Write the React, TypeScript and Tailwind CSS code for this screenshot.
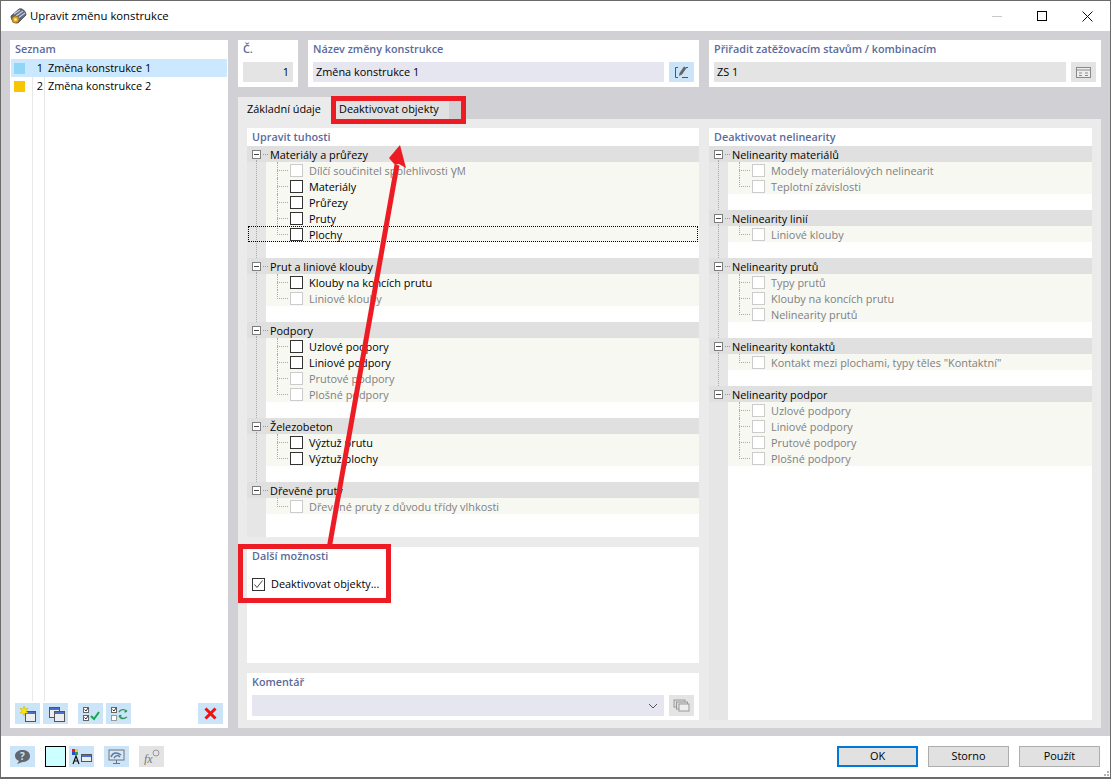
import React from "react";

const FONT = "font-['Open_Sans','Noto_Sans',sans-serif]";

type TreeItem = { label: React.ReactNode; on?: boolean };
type TreeGroup = { title: string; items: TreeItem[] };

const leftGroups: TreeGroup[] = [
  {
    title: "Materiály a průřezy",
    items: [
      { label: <>Dílčí součinitel spolehlivosti <span className="text-[12px]">γ</span><span className="text-[10px]">M</span></> },
      { label: "Materiály", on: true },
      { label: "Průřezy", on: true },
      { label: "Pruty", on: true },
      { label: "Plochy", on: true },
    ],
  },
  {
    title: "Prut a liniové klouby",
    items: [{ label: "Klouby na koncích prutu", on: true }, { label: "Liniové klouby" }],
  },
  {
    title: "Podpory",
    items: [
      { label: "Uzlové podpory", on: true },
      { label: "Liniové podpory", on: true },
      { label: "Prutové podpory" },
      { label: "Plošné podpory" },
    ],
  },
  {
    title: "Železobeton",
    items: [{ label: "Výztuž prutu", on: true }, { label: "Výztuž plochy", on: true }],
  },
  { title: "Dřevěné pruty", items: [{ label: "Dřevěné pruty z důvodu třídy vlhkosti" }] },
];

const rightGroups: TreeGroup[] = [
  { title: "Nelinearity materiálů", items: [{ label: "Modely materiálových nelinearit" }, { label: "Teplotní závislosti" }] },
  { title: "Nelinearity linií", items: [{ label: "Liniové klouby" }] },
  { title: "Nelinearity prutů", items: [{ label: "Typy prutů" }, { label: "Klouby na koncích prutu" }, { label: "Nelinearity prutů" }] },
  { title: "Nelinearity kontaktů", items: [{ label: 'Kontakt mezi plochami, typy těles "Kontaktní"' }] },
  { title: "Nelinearity podpor", items: [{ label: "Uzlové podpory" }, { label: "Liniové podpory" }, { label: "Prutové podpory" }, { label: "Plošné podpory" }] },
];

function Heading({ children }: { children: React.ReactNode }) {
  return <div className="h-[18px] pl-[5px] text-[10.8px] leading-[18px] font-semibold text-[#5a6a9a]">{children}</div>;
}

function Tree({ groups }: { groups: TreeGroup[] }) {
  return (
    <div className="flex flex-col">
      {groups.map((g, gi) => (
        <div key={g.title} className="relative mb-4">
          {gi < groups.length - 1 && <div className="absolute bottom-[-16px] left-[9px] top-[14px] border-l border-dotted border-[#aaa]" />}
          <div className="flex h-4 items-center bg-[#e0e0e0] pt-px">
            <div className="ml-[5px] flex h-[9px] w-[9px] items-center justify-center border border-[#7f7f7f] bg-white">
              <div className="h-px w-[5px] bg-[#444]" />
            </div>
            <div className="ml-[2px] w-[5px] border-t border-dotted border-[#999]" />
            <div className="ml-[2px] text-[10.9px] leading-4 text-black">{g.title}</div>
          </div>
          {g.items.map((it, i) => (
            <div key={i} className="relative ml-[19px] flex h-4 items-center bg-[#f7f8f2] pt-px">
              <div className={`absolute left-[11px] top-0 border-l border-dotted border-[#aaa] ${i < g.items.length - 1 ? "h-4" : "h-[9px]"}`} />
              <div className="ml-[11px] w-[11px] border-t border-dotted border-[#aaa]" />
              <div className={`ml-[2px] h-[13px] w-[13px] bg-white border ${it.on ? "border-[#333]" : "border-[#ccc]"}`} />
              <div className={`ml-[6px] whitespace-nowrap text-[10.9px] leading-4 ${it.on ? "text-black" : "text-[#808080]"}`}>{it.label}</div>
            </div>
          ))}
        </div>
      ))}
    </div>
  );
}

function IconBtn({ children, gray }: { children: React.ReactNode; gray?: boolean }) {
  return <div className={`flex h-[21px] w-[25px] items-center justify-center ${gray ? "bg-[#e3e3e3]" : "bg-[#cce4f7]"}`}>{children}</div>;
}

function Win({ x, y }: { x: number; y: number }) {
  return (
    <g>
      <rect x={x + 0.5} y={y + 0.5} width="10" height="10" fill="#eee" stroke="#555" />
      <rect x={x + 1} y={y + 1} width="9" height="2" fill="#4a6fd0" />
    </g>
  );
}

function Footer({ children, blue }: { children: string; blue?: boolean }) {
  return (
    <div className={`flex h-[21px] w-[81px] items-center justify-center bg-[#e1e1e1] text-[10.9px] text-black ${blue ? "border-2 border-[#0078d7]" : "border border-[#adadad]"}`}>
      {children}
    </div>
  );
}

export default function App() {
  return (
    <div className={`relative flex h-[779px] w-[1111px] flex-col overflow-hidden border border-b-2 border-[#6b6b6b] bg-white ${FONT}`}>
      {/* title bar */}
      <div className="flex h-[30px] shrink-0 items-center bg-white">
        <svg width="18" height="18" viewBox="0 0 18 18" className="ml-[8px]">
          <path d="M2 9 L10 2 C13 1 17 4 17 8 L9 16 C5 16 2 13 2 9 Z" fill="#5f6b80" stroke="#3c4454" strokeWidth="0.8" />
          <path d="M5 7 L11 3 M7 9 L14 4 M9 11 L16 6" stroke="#c9d0dc" strokeWidth="1.2" />
          <circle cx="6.5" cy="12.5" r="3.6" fill="#d9a520" stroke="#7d5f10" strokeWidth="0.7" />
          <circle cx="6.5" cy="12.5" r="1.3" fill="#fff3c0" />
        </svg>
        <div className="ml-[3px] text-[11.3px] text-black">Upravit změnu konstrukce</div>
        <div className="ml-auto flex items-center">
          <div className="h-px w-[10px] bg-[#c8c8c8]" />
          <div className="ml-[35px] h-[10px] w-[10px] border border-black" />
          <svg width="11" height="11" viewBox="0 0 11 11" className="ml-[35px] mr-[17px]">
            <path d="M0.5 0.5 L10.5 10.5 M10.5 0.5 L0.5 10.5" stroke="#111" strokeWidth="1" />
          </svg>
        </div>
      </div>

      {/* body */}
      <div className="flex min-h-0 flex-1 gap-[10px] bg-[#d1d0d5] pb-2 pl-[9px] pr-[9px] pt-[9px]">
        {/* list */}
        <div className="flex w-[218px] shrink-0 flex-col bg-white">
          <Heading>Seznam</Heading>
          <div className="relative mt-px flex-1 pl-px pr-px">
            <div className="absolute bottom-[2px] left-[22px] top-0 w-px bg-[#e8e8e8]" />
            <div className="absolute bottom-[2px] left-[34px] top-0 w-px bg-[#e8e8e8]" />
            <div className="relative flex h-[18px] items-center bg-[#cce8ff] text-[10.9px] text-black">
              <div className="ml-[3px] h-[11px] w-[11px] bg-[#90d6f7]" />
              <div className="ml-[11px] w-[7px] text-right">1</div>
              <div className="ml-[5px]">Změna konstrukce 1</div>
            </div>
            <div className="relative flex h-[18px] items-center text-[10.9px] text-black">
              <div className="ml-[3px] h-[11px] w-[11px] bg-[#f7c600]" />
              <div className="ml-[11px] w-[7px] text-right">2</div>
              <div className="ml-[5px]">Změna konstrukce 2</div>
            </div>
          </div>
          <div className="mb-1 flex h-[21px] items-center pl-[5px] pr-[5px]">
            <IconBtn>
              <svg width="20" height="18" viewBox="0 0 20 18">
                <Win x={7} y={6} />
                <path d="M6 1 L7 4 L10 3 L8 6 L10 8 L7 8 L6 11 L5 8 L2 8 L4 6 L2 3 L5 4 Z" fill="#ffe600" stroke="#c8b400" strokeWidth="0.5" />
              </svg>
            </IconBtn>
            <div className="ml-[3px]">
              <IconBtn>
                <svg width="20" height="18" viewBox="0 0 20 18">
                  <Win x={3} y={2} />
                  <Win x={8} y={6} />
                </svg>
              </IconBtn>
            </div>
            <div className="ml-[10px]">
              <IconBtn>
                <svg width="20" height="18" viewBox="0 0 20 18">
                  <rect x="2.5" y="2.5" width="5" height="5" fill="#fff" stroke="#666" />
                  <rect x="2.5" y="10.5" width="5" height="5" fill="#fff" stroke="#666" />
                  <path d="M3.5 4.5 L5 6 L7 3 M3.5 12.5 L5 14 L7 11" fill="none" stroke="#333" />
                  <path d="M10 11 L13 14 L18 7" fill="none" stroke="#13a84a" strokeWidth="2" />
                </svg>
              </IconBtn>
            </div>
            <div className="ml-[3px]">
              <IconBtn>
                <svg width="20" height="18" viewBox="0 0 20 18">
                  <rect x="2.5" y="2.5" width="5" height="5" fill="#fff" stroke="#666" />
                  <rect x="2.5" y="10.5" width="5" height="5" fill="#fff" stroke="#999" />
                  <path d="M3.5 4.5 L5 6 L7 3" fill="none" stroke="#333" />
                  <path d="M10 7 C12 4 15 4 18 6 M18 6 L15.5 7 M10 11 C12 14 15 14 18 12 M10 11 L12.5 10.5" fill="none" stroke="#2a9a55" strokeWidth="1.4" />
                </svg>
              </IconBtn>
            </div>
            <div className="ml-auto">
              <IconBtn>
                <svg width="13" height="13" viewBox="0 0 13 13">
                  <path d="M1.5 1.5 L11.5 11.5 M11.5 1.5 L1.5 11.5" stroke="#ee1111" strokeWidth="3" />
                </svg>
              </IconBtn>
            </div>
          </div>
        </div>

        {/* main */}
        <div className="flex min-w-0 flex-1 flex-col">
          <div className="flex h-[47px] shrink-0 gap-[10px]">
            <div className="w-[60px] bg-white">
              <Heading>Č.</Heading>
              <div className="ml-[5px] mt-[4px] h-5 w-[50px] bg-[#e4e4e4] pr-[4px] text-right text-[10.9px] leading-5 text-black">1</div>
            </div>
            <div className="w-[391px] bg-white">
              <Heading>Název změny konstrukce</Heading>
              <div className="ml-[5px] mt-[4px] flex h-5 gap-[5px]">
                <div className="h-5 w-[351px] bg-[#e6e6f1] pl-[3px] text-[10.9px] leading-5 text-black">Změna konstrukce 1</div>
                <div className="flex h-5 w-[25px] items-center justify-center bg-[#cce4f7]">
                  <svg width="17" height="15" viewBox="0 0 17 15">
                    <path d="M5 2.5 H2.5 V12.5 H5 M9 12.5 H15 M13 2.5 H15" fill="none" stroke="#555" />
                    <path d="M6 11 L6.5 8 L11 1.5 L13.5 3 L9 9.5 Z" fill="#666" />
                  </svg>
                </div>
              </div>
            </div>
            <div className="flex-1 bg-white">
              <Heading>Přiřadit zatěžovacím stavům / kombinacím</Heading>
              <div className="ml-[5px] mt-[4px] flex h-5 gap-[5px]">
                <div className="h-5 w-[352px] bg-[#e4e4e4] pl-[3px] text-[10.9px] leading-5 text-black">ZS 1</div>
                <div className="flex h-5 w-[25px] items-center justify-center bg-[#e4e4e4]">
                  <svg width="17" height="13" viewBox="0 0 17 13">
                    <rect x="1.5" y="1.5" width="14" height="10" fill="#eee" stroke="#8a8a8a" />
                    <path d="M1.5 4 H15.5 M4 7 H7 M10 7 H13 M4 9.5 H7 M10 9.5 H13" stroke="#8a8a8a" />
                  </svg>
                </div>
              </div>
            </div>
          </div>

          {/* tabs */}
          <div className="mt-[10px] flex h-[22px] shrink-0 text-[10.9px] text-black">
            <div className="flex w-[93px] items-center bg-[#ebebeb] pl-[9px] pt-[3px] whitespace-nowrap">Základní údaje</div>
            <div className="flex w-[118px] items-center bg-[#e1e1e1] pl-[8px] pt-[3px] whitespace-nowrap">Deaktivovat objekty</div>
          </div>

          <div className="flex min-h-0 flex-1 gap-[10px] bg-[#ebebeb] pb-2 pl-[9px] pr-[9px] pt-[9px]">
            <div className="flex w-[452px] shrink-0 flex-col gap-[10px]">
              <div className="h-[409px] bg-white">
                <Heading>Upravit tuhosti</Heading>
                <div className="h-[391px] bg-[linear-gradient(to_right,#e6e6e6_19px,#ffffff_19px)]">
                  <Tree groups={leftGroups} />
                </div>
              </div>
              <div className="h-[116px] bg-white">
                <Heading>Další možnosti</Heading>
                <div className="mt-[11px] flex items-center pl-[5px]">
                  <div className="flex h-[13px] w-[13px] items-center justify-center border border-[#333] bg-white">
                    <svg width="11" height="11" viewBox="0 0 11 11">
                      <path d="M1.5 5.5 L4 8.5 L9.5 1.5" fill="none" stroke="#444" />
                    </svg>
                  </div>
                  <div className="ml-[6px] text-[10.9px] text-black">Deaktivovat objekty...</div>
                </div>
              </div>
              <div className="flex-1 bg-white">
                <Heading>Komentář</Heading>
                <div className="ml-[5px] mt-[4px] flex h-[21px] gap-[5px]">
                  <div className="flex h-[21px] w-[412px] items-center justify-end bg-[#e6e6f1] pr-[6px]">
                    <svg width="10" height="6" viewBox="0 0 10 6">
                      <path d="M1 1 L5 5 L9 1" fill="none" stroke="#555" />
                    </svg>
                  </div>
                  <div className="flex h-[21px] w-[25px] items-center justify-center bg-[#e4e4e4]">
                    <svg width="17" height="15" viewBox="0 0 17 15">
                      <rect x="1" y="2" width="11" height="7" fill="#ddd" stroke="#999" />
                      <rect x="3.5" y="4" width="11" height="7" fill="#ddd" stroke="#999" />
                      <rect x="6" y="6" width="10" height="7" fill="#eee" stroke="#999" />
                    </svg>
                  </div>
                </div>
              </div>
            </div>
            <div className="flex-1 bg-white">
              <Heading>Deaktivovat nelinearity</Heading>
              <div className="h-[574px] bg-[linear-gradient(to_right,#e6e6e6_19px,#ffffff_19px)]">
                <Tree groups={rightGroups} />
              </div>
            </div>
          </div>
        </div>
      </div>

      {/* footer */}
      <div className="flex h-[41px] shrink-0 items-center bg-white pl-[9px] pr-[10px]">
        <IconBtn>
          <svg width="17" height="16" viewBox="0 0 17 16">
            <path d="M8.5 1 C13 1 16 3.5 16 7 C16 10.5 13 13 8.5 13 L3 15 L5 12 C2.5 11 1 9 1 7 C1 3.5 4 1 8.5 1 Z" fill="#5f6770" />
            <text x="8.5" y="11" textAnchor="middle" fontSize="10" fontWeight="700" fill="#cce4f7">?</text>
          </svg>
        </IconBtn>
        <div className="ml-[10px] h-[21px] w-[21px] border border-black bg-[#ccffff]" />
        <div className="ml-[3px]">
          <IconBtn>
            <svg width="21" height="18" viewBox="0 0 21 18">
              <rect x="1" y="1" width="3" height="3" fill="#e02020" />
              <rect x="4" y="1" width="3" height="3" fill="#e8d020" />
              <rect x="1" y="4" width="3" height="3" fill="#2050d0" />
              <rect x="4" y="4" width="3" height="3" fill="#30a040" />
              <path d="M2 16 L5 8 L8 16 M3 13 H7" fill="none" stroke="#111" strokeWidth="1.2" />
              <rect x="10.5" y="6.5" width="10" height="7" fill="#eee" stroke="#555" />
              <rect x="11" y="7" width="9" height="2" fill="#4a6fd0" />
            </svg>
          </IconBtn>
        </div>
        <div className="ml-[10px]">
          <IconBtn>
            <svg width="17" height="16" viewBox="0 0 17 16">
              <rect x="1" y="1" width="15" height="10" fill="#dde6ee" stroke="#6a7480" />
              <path d="M3 8 C5 3 9 3 13 6 M6 9 C8 6 10 6 12 8" fill="none" stroke="#4a7ab0" strokeWidth="1.5" />
              <path d="M8.5 11 V14 M5 14.5 H12" stroke="#6a7480" />
            </svg>
          </IconBtn>
        </div>
        <div className="ml-[10px]">
          <IconBtn gray>
            <svg width="18" height="16" viewBox="0 0 18 16">
              <circle cx="13" cy="4" r="3" fill="none" stroke="#999" />
              <text x="1" y="14" fontSize="12" fontStyle="italic" fontFamily="'Liberation Serif', serif" fill="#777">fx</text>
            </svg>
          </IconBtn>
        </div>
        <div className="ml-auto flex gap-[10px]">
          <Footer blue>OK</Footer>
          <Footer>Storno</Footer>
          <Footer>Použít</Footer>
        </div>
      </div>

      {/* focus row, annotations over the page */}
      <div className="absolute left-[247px] top-[225px] h-4 w-[450px] border border-dotted border-black" />
      <div className="absolute left-[330px] top-[95px] h-[28px] w-[135px] border-[5px] border-[#ed1c24]" />
      <div className="absolute left-[237px] top-[543px] h-[59px] w-[153px] border-[5px] border-[#ed1c24]" />
      <svg width="1111" height="779" className="pointer-events-none absolute left-[-1px] top-[-1px]">
        <path d="M329.5 546 L397 165" stroke="#ed1c24" strokeWidth="5" fill="none" />
        <path d="M400 145 L406 168 L399 164 L395 165 L389 158 Z" fill="#ed1c24" />
        <path d="M1107 771 h2 v2 h-2 Z M1104 774 h2 v2 h-2 Z M1107 774 h2 v2 h-2 Z M1101 777 h2 v1 h-2 Z M1104 777 h2 v1 h-2 Z M1107 777 h2 v1 h-2 Z" fill="#b5b5b5" />
      </svg>
    </div>
  );
}
